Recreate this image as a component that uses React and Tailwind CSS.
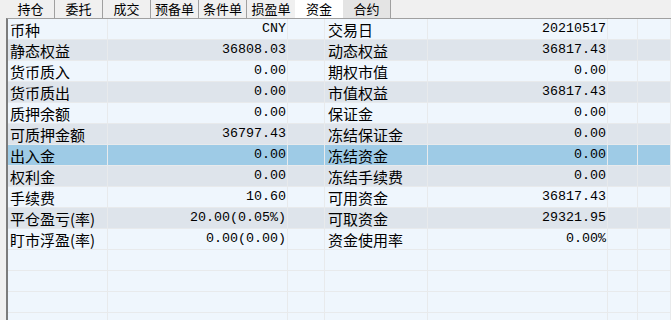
const tabs = ["持仓", "委托", "成交", "预备单", "条件单", "损盈单", "资金", "合约"];

const rows = [
  ["币种", "CNY", "交易日", "20210517"],
  ["静态权益", "36808.03", "动态权益", "36817.43"],
  ["货币质入", "0.00", "期权市值", "0.00"],
  ["货币质出", "0.00", "市值权益", "36817.43"],
  ["质押余额", "0.00", "保证金", "0.00"],
  ["可质押金额", "36797.43", "冻结保证金", "0.00"],
  ["出入金", "0.00", "冻结资金", "0.00"],
  ["权利金", "0.00", "冻结手续费", "0.00"],
  ["手续费", "10.60", "可用资金", "36817.43"],
  ["平仓盈亏(率)", "20.00(0.05%)", "可取资金", "29321.95"],
  ["盯市浮盈(率)", "0.00(0.00)", "资金使用率", "0.00%"],
  ["", "", "", ""],
  ["", "", "", ""],
  ["", "", "", ""],
  ["", "", "", ""],
];

const cjk = "font-['Noto_Sans_CJK_SC',sans-serif]";
const mono = "font-['Liberation_Mono','Noto_Sans_CJK_SC',monospace]";

function Row({ r, i }) {
  const empty = !r[0];
  let bg = "bg-[#eff6fd]";
  if (i === 6) bg = "bg-[#9ecbe6]";
  else if (!empty && i % 2 === 1) bg = "bg-[#dee4eb]";
  const cell = "h-[21px] border-r border-b border-[#e8eaec] flex items-center overflow-hidden whitespace-nowrap";
  return (
    <div className={`grid grid-cols-[100px_180px_37px_103px_180px_30px_1fr] ${bg}`}>
      <div className={`${cell} ${cjk} pl-[2px] text-[15px] leading-none`}>{r[0]}</div>
      <div className={`${cell} ${mono} justify-end pr-[1px] text-[13.33px]`}>{r[1]}</div>
      <div className={cell} />
      <div className={`${cell} ${cjk} pl-[3px] text-[15px] leading-none`}>{r[2]}</div>
      <div className={`${cell} ${mono} justify-end pr-[1px] text-[13.33px]`}>{r[3]}</div>
      <div className={cell} />
      <div className={cell} />
    </div>
  );
}

export default function App() {
  return (
    <div className="w-[671px] h-[320px] bg-[#f0f0f0] overflow-hidden flex flex-col text-black">
      {/* tab strip */}
      <div className="h-[21px] flex items-end pl-[7px]">
        {tabs.map((t, i) => {
          const active = t === "资金";
          const last = i === tabs.length - 1;
          return (
            <div
              key={t}
              className={`w-[48px] h-[18px] flex items-center justify-center text-[13px] ${cjk} ${
                active ? "bg-white" : last ? "bg-[#e4e4e4] border-r border-[#a0a0a0]" : ""
              } ${!active && !last && tabs[i + 1] !== "资金" ? "border-r border-[#a0a0a0]" : ""}`}
            >
              {t}
            </div>
          );
        })}
      </div>
      {/* grid */}
      <div className="flex-1 flex pl-[6px]">
        <div className="flex-1 border-t border-l-2 border-t-[#a0a0a0] border-l-[#7c7c7c] overflow-hidden">
          {rows.map((r, i) => (
            <Row key={i} r={r} i={i} />
          ))}
        </div>
      </div>
    </div>
  );
}
